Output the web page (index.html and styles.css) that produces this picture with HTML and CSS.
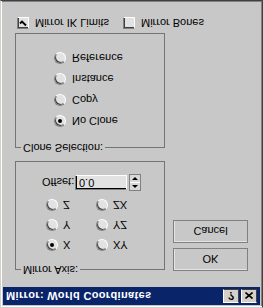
FILE: index.html
```html
<!DOCTYPE html>
<html lang="en">
<head>
    <meta charset="UTF-8">
    <title>Mirror: World Coordinates</title>
    <link rel="stylesheet" href="styles.css">
</head>
<body>
    <!-- the whole dialog is shown upside down, so it is laid out normally and flipped -->
    <div class="window">
        <div class="titlebar">
            <span class="title">Mirror: World Coordinates</span>
            <span class="tb-btn help">?</span>
            <span class="tb-btn close">
                <svg width="8" height="7" viewBox="0 0 8 7"><path d="M0.5 0.5 L7.5 6.5 M7.5 0.5 L0.5 6.5" stroke="#000" stroke-width="1.6"/></svg>
            </span>
        </div>
        <div class="client">
            <div class="top-row">
                <fieldset class="group axis-group">
                    <legend>Mirror Axis:</legend>
                    <div class="axis-grid">
                        <label class="opt"><span class="radio on"></span>X</label>
                        <label class="opt"><span class="radio"></span>XY</label>
                        <label class="opt"><span class="radio"></span>Y</label>
                        <label class="opt"><span class="radio"></span>YZ</label>
                        <label class="opt"><span class="radio"></span>Z</label>
                        <label class="opt"><span class="radio"></span>ZX</label>
                    </div>
                    <div class="offset-row">
                        <span class="offset-label">Offset:</span>
                        <span class="field">0.0</span>
                        <span class="spinner">
                            <span class="spin"><span class="arrow-up"></span></span>
                            <span class="spin"><span class="arrow-down"></span></span>
                        </span>
                    </div>
                </fieldset>
                <div class="buttons">
                    <button class="btn">OK</button>
                    <button class="btn">Cancel</button>
                </div>
            </div>
            <fieldset class="group clone-group">
                <legend>Clone Selection:</legend>
                <div class="clone-list">
                    <label class="opt"><span class="radio on"></span>No Clone</label>
                    <label class="opt"><span class="radio"></span>Copy</label>
                    <label class="opt"><span class="radio"></span>Instance</label>
                    <label class="opt"><span class="radio"></span>Reference</label>
                </div>
            </fieldset>
            <div class="checks">
                <label class="check-opt first">
                    <span class="checkbox">
                        <svg width="8" height="8" viewBox="0 0 8 8"><path d="M1 3.5 L3 5.5 L7 1.5" fill="none" stroke="#000" stroke-width="1.8"/></svg>
                    </span>Mirror IK Limits
                </label>
                <label class="check-opt"><span class="checkbox"></span>Mirror Bones</label>
            </div>
        </div>
    </div>
</body>
</html>
```
FILE: styles.css
```css
html, body {
    margin: 0;
    padding: 0;
    overflow: hidden;
    background: #c8c8c8;
}
.window {
    width: 263px;
    height: 308px;
    box-sizing: border-box;
    background: #c8c8c8;
    border: 1px solid;
    border-color: #d4d0c8 #404040 #404040 #d4d0c8;
    box-shadow: inset 1px 1px #ffffff, inset -1px -1px #808080;
    padding: 2px;
    font: 11px "Liberation Sans", Arial, sans-serif;
    color: #000;
    transform: scaleY(-1); /* screenshot is upside down */
}

/* title bar */
.titlebar {
    height: 18px;
    background: #0a246a;
    display: flex;
    align-items: center;
    padding: 0 3px;
    color: #ffffff;
    font-weight: bold;
}
.title {
    flex: 1;
    white-space: nowrap;
    letter-spacing: 0.35px;
}
.tb-btn {
    width: 16px;
    height: 14px;
    box-sizing: border-box;
    background: #d4d0c8;
    border: 1px solid;
    border-color: #ffffff #404040 #404040 #ffffff;
    display: flex;
    align-items: center;
    justify-content: center;
    color: #000;
    font-size: 11px;
    line-height: 12px;
}
.help {
    margin-right: 2px;
}

/* client area */
.client {
    padding: 11px 0 0 12px;
}
.top-row {
    display: flex;
    align-items: flex-start;
    gap: 8px;
}
.group {
    margin: 0;
    border: 1px solid #747474;
    padding: 0 0 0 5px;
    box-sizing: border-box;
    min-width: 0;
}
.group legend {
    padding: 0 2px;
    line-height: 13px;
}
.axis-group {
    width: 150px;
    height: 115px;
}
.clone-group {
    width: 150px;
    height: 121px;
    margin-top: 7px;
}
.axis-grid {
    display: grid;
    grid-template-columns: 50px auto;
    grid-auto-rows: 20px;
    padding-left: 25px;
    margin-top: 8px;
}
.opt {
    display: flex;
    align-items: center;
    gap: 5px;
    white-space: nowrap;
}
.radio {
    width: 12px;
    height: 12px;
    box-sizing: border-box;
    border-radius: 50%;
    border: 1px solid;
    border-color: #808080 #ffffff #ffffff #808080;
    background: #e2e2e2;
    box-shadow: inset 1px 1px #404040;
    display: flex;
    align-items: center;
    justify-content: center;
}
.radio.on::after {
    content: "";
    width: 4px;
    height: 4px;
    border-radius: 50%;
    background: #000;
}

/* offset spinner */
.offset-row {
    display: flex;
    align-items: center;
    margin: 4px 0 0 21px;
    height: 17px;
}
.offset-label {
    width: 33px;
}
.field {
    width: 52px;
    height: 15px;
    box-sizing: border-box;
    background: #e2e2e2;
    border: 1px solid;
    border-color: #808080 #ffffff #ffffff #808080;
    box-shadow: inset 1px 1px #000;
    padding: 0 0 0 3px;
    line-height: 13px;
}
.spinner {
    width: 12px;
    height: 17px;
    box-sizing: border-box;
    margin-left: 2px;
    border: 1px solid #808080;
    display: flex;
    flex-direction: column;
    background: #d8d8d8;
}
.spin {
    flex: 1;
    display: flex;
    align-items: center;
    justify-content: center;
    border-bottom: 1px solid #ffffff;
}
.spin:last-child {
    border-bottom: none;
}
.arrow-up {
    width: 0;
    height: 0;
    border-left: 3px solid transparent;
    border-right: 3px solid transparent;
    border-bottom: 3px solid #000;
}
.arrow-down {
    width: 0;
    height: 0;
    border-left: 3px solid transparent;
    border-right: 3px solid transparent;
    border-top: 3px solid #000;
}

/* buttons */
.buttons {
    display: flex;
    flex-direction: column;
    gap: 5px;
    margin-top: 5px;
}
.btn {
    width: 75px;
    height: 23px;
    padding: 0;
    background: #c8c8c8;
    border: 1px solid #808080;
    box-shadow: inset 1px 1px #e4e4e4;
    font: inherit;
    color: #000;
}

/* clone options */
.clone-list {
    display: flex;
    flex-direction: column;
    padding-left: 33px;
    margin-top: 9px;
}
.clone-list .opt {
    height: 21px;
    gap: 6px;
}

/* check boxes */
.checks {
    display: flex;
    align-items: center;
    margin: 4px 0 0 2px;
}
.check-opt {
    display: flex;
    align-items: center;
    gap: 6px;
    white-space: nowrap;
}
.check-opt.first {
    width: 106px;
}
.checkbox {
    width: 12px;
    height: 12px;
    box-sizing: border-box;
    border: 1px solid;
    border-color: #808080 #ffffff #ffffff #808080;
    box-shadow: inset 1px 1px #404040;
    background: #e2e2e2;
    display: flex;
    align-items: center;
    justify-content: center;
}
```
